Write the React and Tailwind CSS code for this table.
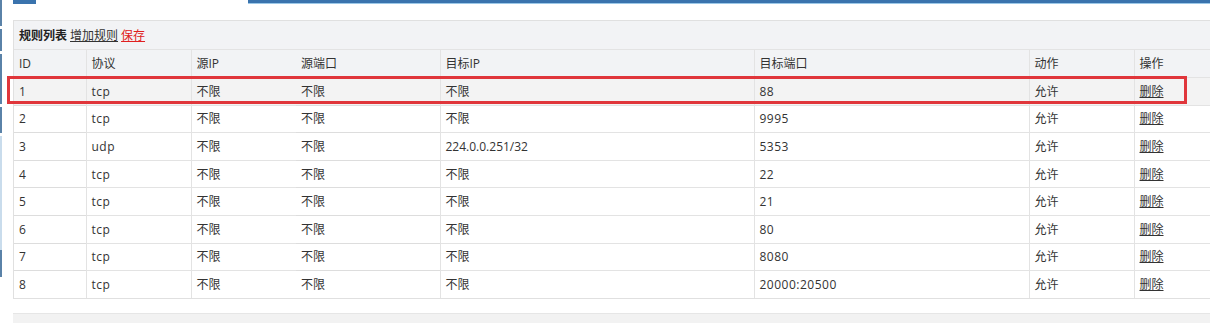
import React from "react";

const rows = [
  { id: 1, proto: "tcp", dip: "不限", dport: "88" },
  { id: 2, proto: "tcp", dip: "不限", dport: "9995" },
  { id: 3, proto: "udp", dip: "224.0.0.251/32", dport: "5353" },
  { id: 4, proto: "tcp", dip: "不限", dport: "22" },
  { id: 5, proto: "tcp", dip: "不限", dport: "21" },
  { id: 6, proto: "tcp", dip: "不限", dport: "80" },
  { id: 7, proto: "tcp", dip: "不限", dport: "8080" },
  { id: 8, proto: "tcp", dip: "不限", dport: "20000:20500" },
];

const font = { fontFamily: '"Open Sans", "Noto Sans CJK SC", sans-serif' };

function EdgeBar() {
  return (
    <div className="absolute left-0 top-0 w-[2px] h-full flex flex-col">
      <div className="h-[26px] bg-[#5a82a8]" />
      <div className="h-[3px]" />
      <div className="h-[22px] bg-[#5a82a8]" />
      <div className="h-[3px]" />
      <div className="h-[50px] bg-[#5a82a8]" />
      <div className="h-[3px]" />
      <div className="h-[26px] bg-[#5a82a8]" />
      <div className="h-[3px]" />
      <div className="h-[114px] bg-[#c9dcec]" />
      <div className="h-[27px] bg-[#5a82a8]" />
    </div>
  );
}

export default function App() {
  const th = "h-[28px] px-[5px] pt-[1px] font-normal text-left";
  const td = "h-[27.6px] px-[5px] pt-[1px] border-t border-[#dddddd]";
  const vline = "border-l border-[#e3e3e3]";

  return (
    <div className="relative w-[1210px] h-[323px] overflow-hidden bg-white text-[12px] text-[#333]" style={font}>
      <EdgeBar />

      {/* tab strip */}
      <div className="flex h-[4px]">
        <div className="w-[13px]" />
        <div className="w-[23px] bg-[#3a73ad]" />
        <div className="w-[212px] bg-white" />
        <div className="flex-1 bg-[#3a73ad] border-b border-[#9cc8e8]" />
      </div>

      <div className="ml-[13px] mt-[16px] w-[1205px] border border-[#e0e0e0] bg-white">
        <div className="h-[28px] flex items-center gap-[3px] px-[5px] pt-[1px] bg-[#f2f3f5]">
          <span className="font-bold text-[#222]">规则列表</span>
          <a className="underline text-[#333]">增加规则</a>
          <a className="underline text-[#e02020]">保存</a>
        </div>
        <table className="w-full border-collapse table-fixed">
          <colgroup>
            <col className="w-[72px]" />
            <col className="w-[105px]" />
            <col className="w-[105px]" />
            <col className="w-[144px]" />
            <col className="w-[314px]" />
            <col className="w-[275px]" />
            <col className="w-[105px]" />
            <col />
          </colgroup>
          <thead>
            <tr className="bg-[#f2f3f5] border-t border-[#e3e3e3]">
              <th className={th}>ID</th>
              <th className={`${th} ${vline}`}>协议</th>
              <th className={`${th} ${vline}`}>源IP</th>
              <th className={th}>源端口</th>
              <th className={`${th} ${vline}`}>目标IP</th>
              <th className={`${th} ${vline}`}>目标端口</th>
              <th className={`${th} ${vline}`}>动作</th>
              <th className={`${th} ${vline}`}>操作</th>
            </tr>
          </thead>
          <tbody>
            {rows.map((r) => (
              <tr key={r.id} className={r.id === 1 ? "bg-[#f3f3f3]" : "bg-white"}>
                <td className={td}>{r.id}</td>
                <td className={`${td} ${vline} tracking-[0.5px]`}>{r.proto}</td>
                <td className={`${td} ${vline}`}>不限</td>
                <td className={td}>不限</td>
                <td className={`${td} ${vline}`}>{r.dip}</td>
                <td className={`${td} ${vline} tracking-[0.5px]`}>{r.dport}</td>
                <td className={`${td} ${vline}`}>允许</td>
                <td className={`${td} ${vline}`}>
                  <a className="underline text-[#333]">删除</a>
                </td>
              </tr>
            ))}
          </tbody>
        </table>
      </div>

      <div className="ml-[13px] mt-[14px] h-[12px] bg-[#f2f2f2] border-t border-[#e6e6e6]" />

      {/* annotation highlight */}
      <div className="absolute left-[7px] top-[76px] w-[1180px] h-[28px] border-[3px] border-[#e0363b] pointer-events-none" />
    </div>
  );
}
